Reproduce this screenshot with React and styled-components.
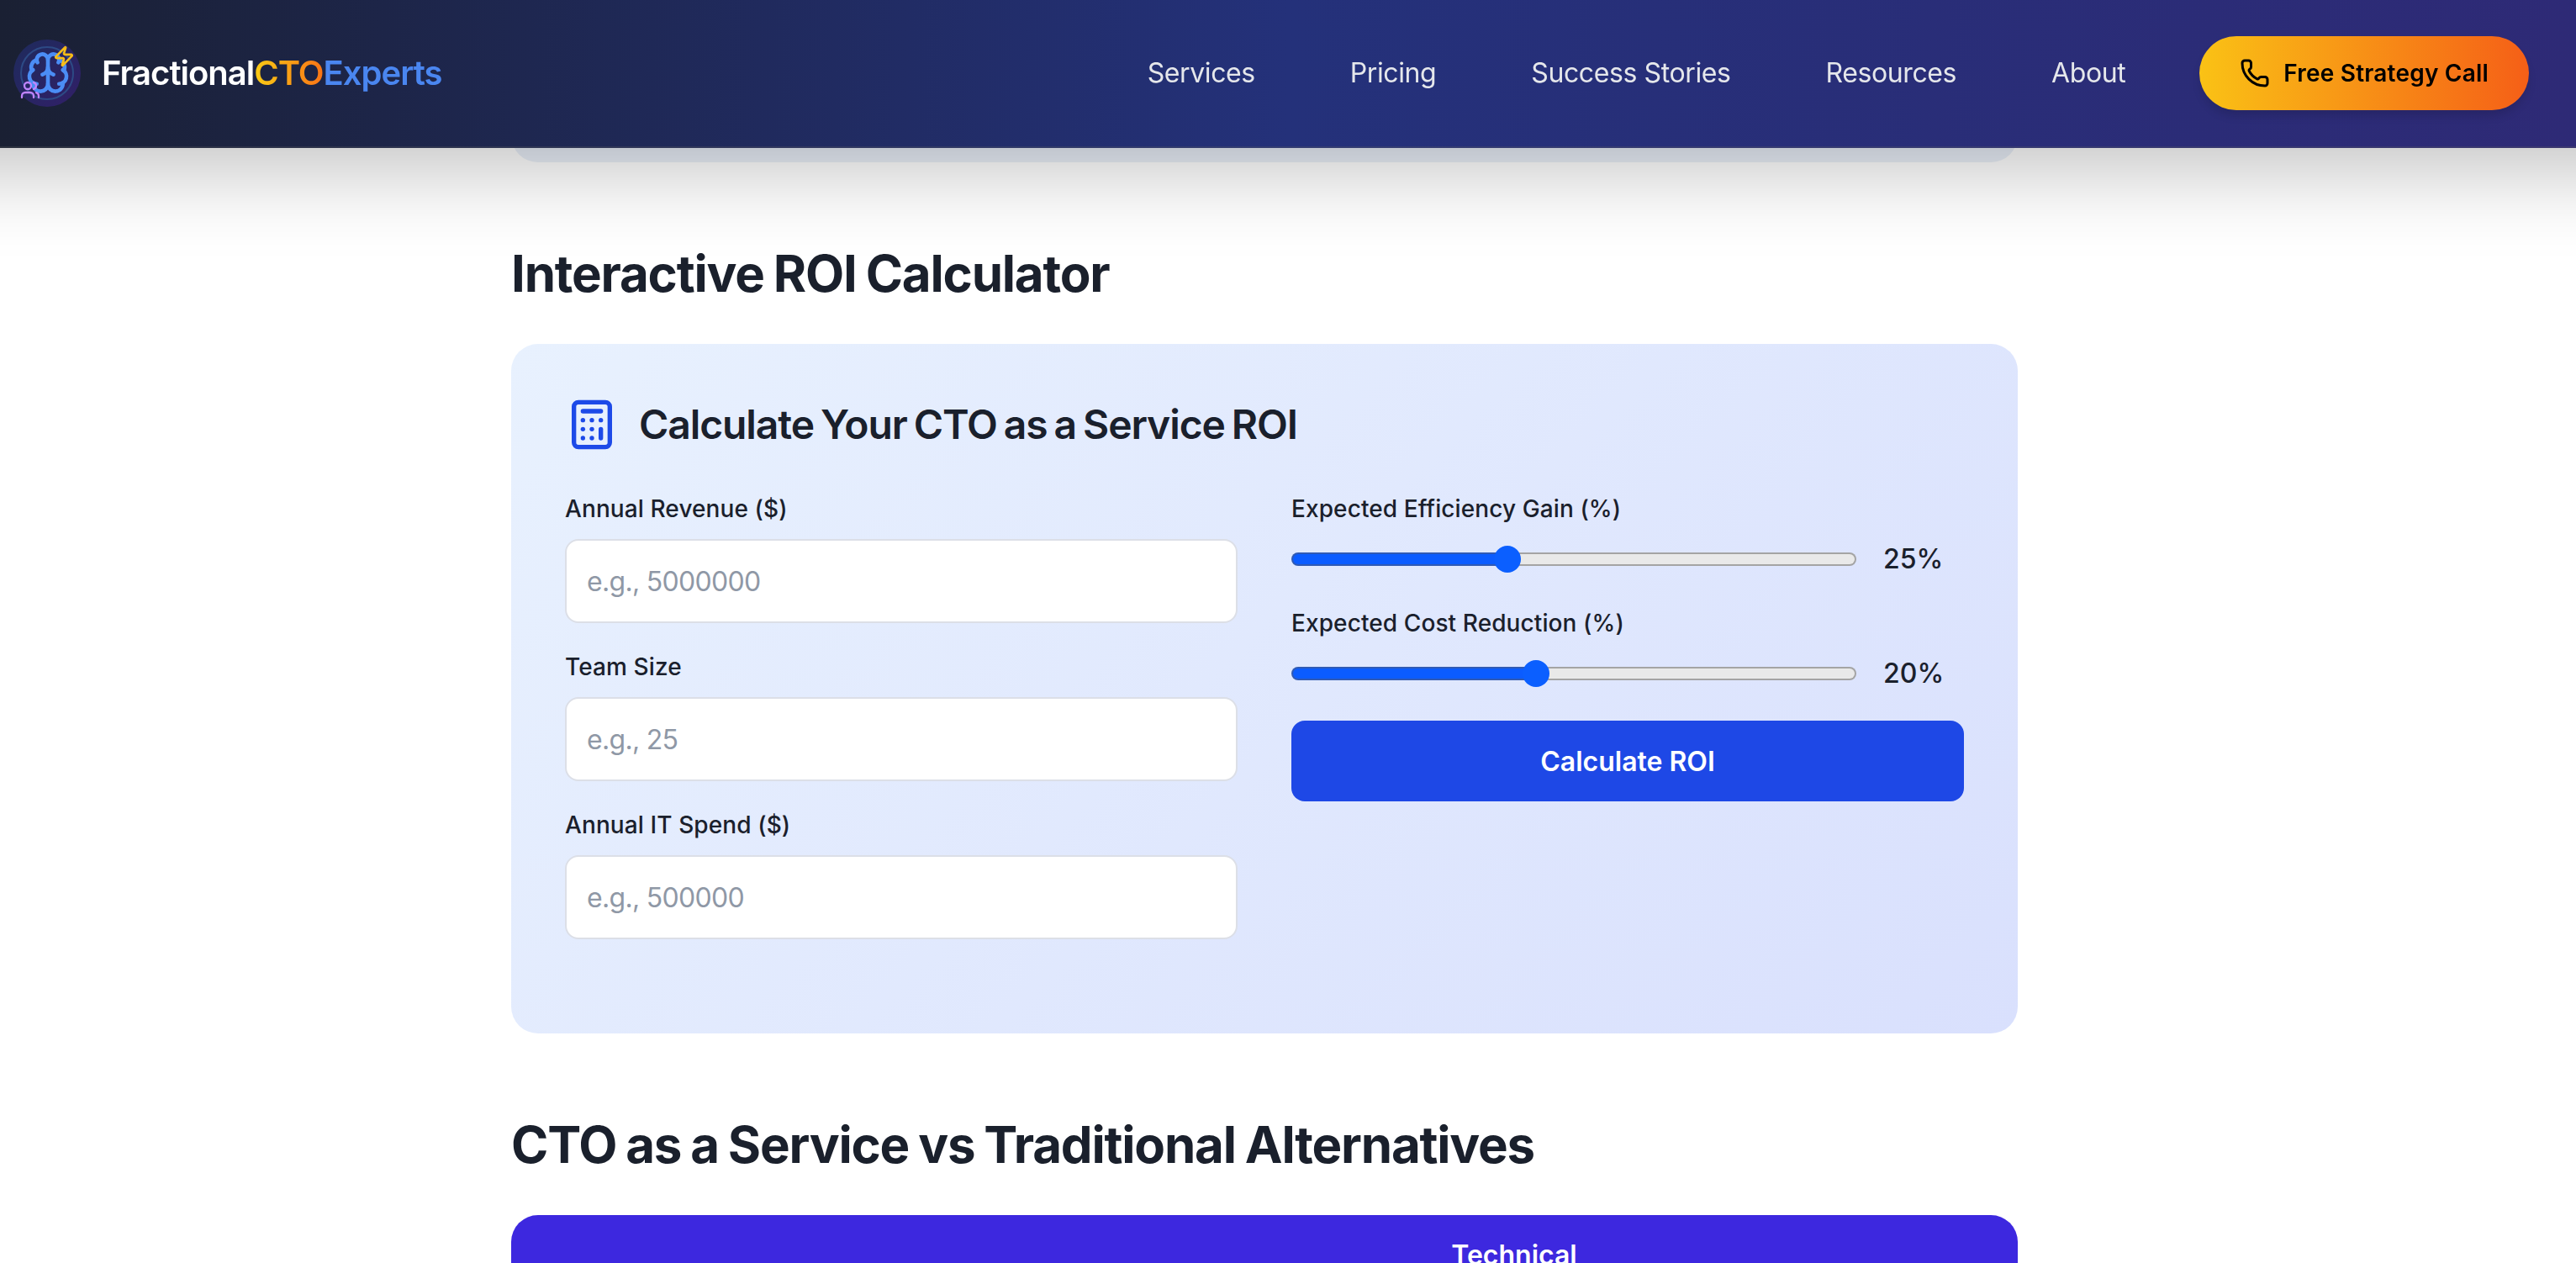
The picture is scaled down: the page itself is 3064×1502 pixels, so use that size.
import React, { useState } from "react";
import styled, { createGlobalStyle } from "styled-components";
import { Brain, Zap, Users, Phone, Calculator } from "lucide-react";

const Global = createGlobalStyle`
  html, body { margin: 0; padding: 0; height: 100%; overflow: hidden; background: #fff; }
  body { font-family: Inter, "Noto Sans", sans-serif; color: #1a202c; }
  * { box-sizing: border-box; }
`;

const Header = styled.header`
  position: fixed;
  top: 0;
  left: 0;
  right: 0;
  z-index: 10;
  height: 176px;
  display: flex;
  align-items: center;
  justify-content: space-between;
  padding: 0 56px 0 16px;
  background: linear-gradient(90deg, #1a2033 0%, #24317a 50%, #2e2a76 100%);
  border-bottom: 2px solid rgba(255, 255, 255, 0.12);
  &::before {
    content: "";
    position: absolute;
    top: 0;
    bottom: 0;
    left: -300px;
    right: -300px;
    z-index: -1;
    box-shadow: 0 50px 100px -24px rgba(0, 0, 0, 0.25);
  }
`;

const Brand = styled.div`
  display: flex;
  align-items: center;
  gap: 25px;
`;

const LogoMark = styled.svg`
  display: block;
  width: 80px;
  height: 80px;
`;

const Wordmark = styled.div`
  font-size: 40px;
  line-height: 56px;
  font-weight: 600;
  letter-spacing: -1px;
  color: #fff;
`;

const WordCto = styled.span`
  background: linear-gradient(90deg, #facc15, #f97316);
  -webkit-background-clip: text;
  background-clip: text;
  color: transparent;
`;

const WordExperts = styled.span`
  color: #4a86f0;
`;

const NavArea = styled.div`
  display: flex;
  align-items: center;
  gap: 88px;
`;

const Nav = styled.nav`
  display: flex;
  align-items: center;
  gap: 113px;
`;

const NavLink = styled.a`
  font-size: 32px;
  line-height: 48px;
  font-weight: 400;
  letter-spacing: -0.4px;
  color: #e5e7eb;
  text-decoration: none;
`;

const CtaButton = styled.button`
  display: flex;
  align-items: center;
  gap: 16px;
  height: 88px;
  padding: 0 48px;
  border: none;
  border-radius: 44px;
  background: linear-gradient(90deg, #fac215, #f55f17);
  box-shadow: 0 8px 12px -2px rgba(0, 0, 0, 0.14);
  font-family: inherit;
  font-size: 28px;
  font-weight: 600;
  letter-spacing: 0.2px;
  color: #000;
`;

const Page = styled.div`
  padding-right: 56px;
`;

const Main = styled.main`
  width: 1792px;
  margin: 0 auto;
`;

const PreviousCard = styled.div`
  height: 193px;
  margin-bottom: 96px;
  border-radius: 0 0 32px 32px;
  background: #eaf0f9;
`;

const SectionTitle = styled.h2`
  margin: 0 0 48px;
  font-size: 60px;
  line-height: 72px;
  font-weight: 700;
  letter-spacing: -1.2px;
  word-spacing: -2px;
  color: #1a202c;
`;

const CalculatorCard = styled.section`
  margin-bottom: 96px;
  padding: 64px;
  border-radius: 32px;
  background: linear-gradient(135deg, #e8f1fe, #d9e0fd);
`;

const CardHeading = styled.div`
  display: flex;
  align-items: center;
  gap: 24px;
  margin-bottom: 48px;
  color: #1d4ae8;
`;

const CardTitle = styled.h3`
  margin: 0;
  font-size: 48px;
  line-height: 64px;
  font-weight: 600;
  letter-spacing: -1.1px;
  word-spacing: -3px;
  color: #1a202c;
`;

const FormGrid = styled.div`
  display: grid;
  grid-template-columns: 1fr 1fr;
  gap: 64px;
  align-items: start;
  padding-bottom: 48px;
`;

const Column = styled.div`
  display: flex;
  flex-direction: column;
  gap: 32px;
`;

const Field = styled.div`
  display: flex;
  flex-direction: column;
  gap: 16px;
`;

const FieldLabel = styled.label`
  font-size: 28px;
  line-height: 40px;
  font-weight: 500;
  letter-spacing: 0.1px;
  color: #1a202c;
`;

const TextInput = styled.input`
  width: 100%;
  height: 100px;
  padding: 0 24px;
  border: 2px solid #dcdfe7;
  border-radius: 16px;
  background: #fff;
  font-family: inherit;
  font-size: 32px;
  letter-spacing: -0.7px;
  color: #1a202c;
  outline: none;
  &::placeholder {
    color: #8f98a6;
    opacity: 1;
  }
`;

const SliderRow = styled.div`
  display: flex;
  align-items: center;
  gap: 32px;
  height: 48px;
`;

const Range = styled.input`
  flex: 1;
  min-width: 0;
  height: 32px;
  margin: 0;
  appearance: none;
  -webkit-appearance: none;
  background: transparent;
  &::-webkit-slider-runnable-track {
    height: 16px;
    border: 2px solid transparent;
    border-radius: 8px;
    background:
      linear-gradient(90deg, #0b5cff ${(p) => p.$pct}, #e9e9e9 ${(p) => p.$pct}) padding-box,
      linear-gradient(90deg, #2f5ab5 ${(p) => p.$pct}, #a4a4a4 ${(p) => p.$pct}) border-box;
  }
  &::-webkit-slider-thumb {
    -webkit-appearance: none;
    width: 32px;
    height: 32px;
    margin-top: -10px;
    border: none;
    border-radius: 50%;
    background: #0b5fff;
  }
`;

const RangeValue = styled.span`
  width: 96px;
  font-size: 32px;
  line-height: 48px;
  font-weight: 500;
  color: #1a202c;
`;

const SubmitButton = styled.button`
  height: 96px;
  border: none;
  border-radius: 16px;
  background: #1e48e6;
  font-family: inherit;
  font-size: 32px;
  font-weight: 600;
  color: #fff;
`;

const ComparisonTable = styled.div`
  border-radius: 32px 32px 0 0;
  background: #3d28df;
  display: grid;
  grid-template-columns: 1046px 294px 452px;
  padding: 24px 0;
`;

const HeadCell = styled.div`
  grid-column: 2;
  text-align: center;
  font-size: 32px;
  line-height: 48px;
  font-weight: 600;
  color: #fff;
`;

const links = ["Services", "Pricing", "Success Stories", "Resources", "About"];

function SliderField({ label, min, max, initial }) {
  const [value, setValue] = useState(initial);
  const pct = (value - min) / (max - min);
  // fill runs to the thumb centre inside the 32px thumb travel
  const fill = `calc(${pct * 100}% + ${16 - pct * 32}px)`;
  return (
    <Field>
      <FieldLabel>{label}</FieldLabel>
      <SliderRow>
        <Range
          type="range"
          min={min}
          max={max}
          value={value}
          $pct={fill}
          onChange={(e) => setValue(Number(e.target.value))}
        />
        <RangeValue>{value}%</RangeValue>
      </SliderRow>
    </Field>
  );
}

export default function App() {
  return (
    <>
      <Global />
      <Header>
        <Brand>
          <LogoMark viewBox="0 0 80 80" aria-hidden="true">
            <defs>
              <linearGradient id="logoBg" x1="0" y1="0" x2="1" y2="1">
                <stop offset="0" stopColor="#1e2b5c" />
                <stop offset="1" stopColor="#311f68" />
              </linearGradient>
            </defs>
            <circle cx="40" cy="40" r="40" fill="url(#logoBg)" />
            <circle cx="40" cy="40" r="31" fill="none" stroke="#2d4a85" strokeWidth="2" />
            <Brain x={14.5} y={13} size={53} color="#4b8df5" strokeWidth={2.1} />
            <Zap x={47} y={7} size={26} color="#f7bd17" strokeWidth={2.4} />
            <Users x={8} y={48} size={24} color="#c084fc" strokeWidth={2.3} />
          </LogoMark>
          <Wordmark>
            Fractional<WordCto>CTO</WordCto>
            <WordExperts>Experts</WordExperts>
          </Wordmark>
        </Brand>
        <NavArea>
          <Nav>
            {links.map((l) => (
              <NavLink key={l} href="#">
                {l}
              </NavLink>
            ))}
          </Nav>
          <CtaButton>
            <Phone size={36} strokeWidth={2} />
            Free Strategy Call
          </CtaButton>
        </NavArea>
      </Header>
      <Page>
        <Main>
          <PreviousCard />
          <SectionTitle>Interactive ROI Calculator</SectionTitle>
          <CalculatorCard>
            <CardHeading>
              <Calculator size={64} strokeWidth={2} />
              <CardTitle>Calculate Your CTO as a Service ROI</CardTitle>
            </CardHeading>
            <FormGrid>
              <Column>
                <Field>
                  <FieldLabel>Annual Revenue ($)</FieldLabel>
                  <TextInput placeholder="e.g., 5000000" />
                </Field>
                <Field>
                  <FieldLabel>Team Size</FieldLabel>
                  <TextInput placeholder="e.g., 25" />
                </Field>
                <Field>
                  <FieldLabel>Annual IT Spend ($)</FieldLabel>
                  <TextInput placeholder="e.g., 500000" />
                </Field>
              </Column>
              <Column>
                <SliderField label="Expected Efficiency Gain (%)" min={10} max={50} initial={25} />
                <SliderField label="Expected Cost Reduction (%)" min={5} max={40} initial={20} />
                <SubmitButton>Calculate ROI</SubmitButton>
              </Column>
            </FormGrid>
          </CalculatorCard>
          <SectionTitle>CTO as a Service vs Traditional Alternatives</SectionTitle>
          <ComparisonTable>
            <HeadCell>Technical</HeadCell>
          </ComparisonTable>
        </Main>
      </Page>
    </>
  );
}
